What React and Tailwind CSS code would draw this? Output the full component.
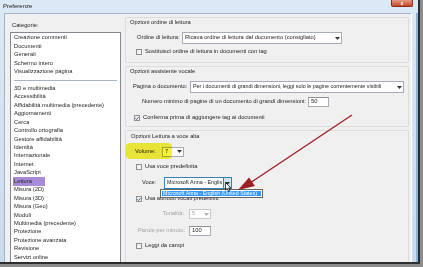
import React from "react";

const cats1 = ["Creazione commenti", "Documenti", "Generali", "Schermo intero", "Visualizzazione pagina"];
const cats2 = [
  "3D e multimedia",
  "Accessibilità",
  "Affidabilità multimedia (precedente)",
  "Aggiornamenti",
  "Cerca",
  "Controllo ortografia",
  "Gestore affidabilità",
  "Identità",
  "Internazionale",
  "Internet",
  "JavaScript",
  "Lettura",
  "Misura (2D)",
  "Misura (3D)",
  "Misura (Geo)",
  "Moduli",
  "Multimedia (precedente)",
  "Protezione",
  "Protezione avanzata",
  "Revisione",
  "Servizi online",
];

function Check({ checked }) {
  return (
    <div className="w-[6px] h-[6px] border border-[#8e8f8f] bg-gradient-to-br from-[#e6e6e6] to-white flex items-center justify-center shrink-0">
      {checked && (
        <svg width="5" height="5" viewBox="0 0 5 5">
          <path d="M0.6 2.4 L2 3.8 L4.4 0.8" stroke="#2a3d5c" strokeWidth="1" fill="none" />
        </svg>
      )}
    </div>
  );
}

function Arrow({ color = "#333" }) {
  return (
    <svg width="5" height="3" viewBox="0 0 5 3">
      <path d="M0 0 L5 0 L2.5 3 Z" fill={color} />
    </svg>
  );
}

function Select({ w, h = 12, text, disabled, focus, small }) {
  return (
    <div
      className={`flex items-stretch border ${focus ? "border-[#3c7fb1]" : disabled ? "border-[#c8c8c8]" : "border-[#a5acb5]"} bg-white shrink-0`}
      style={{ width: w, height: h }}
    >
      <div
        className={`flex-1 flex items-center pl-[2px] overflow-hidden whitespace-nowrap ${small ? "text-[5.4px]" : ""} ${disabled ? "text-[#a0a0a0]" : "text-[#1e1e1e]"}`}
      >
        {text}
      </div>
      <div
        className={`w-[8px] shrink-0 flex items-center justify-center ${focus ? "bg-[#cfe6f8] border-l border-[#3c7fb1]" : "bg-white"}`}
      >
        <Arrow color={disabled ? "#b0b0b0" : "#333"} />
      </div>
    </div>
  );
}

function Input({ w, h, text }) {
  return (
    <div
      className="border border-[#a5acb5] border-t-[#8a8f96] bg-white flex items-center pl-[2px] text-[#1e1e1e] shrink-0"
      style={{ width: w, height: h }}
    >
      {text}
    </div>
  );
}

export default function App() {
  return (
    <div className="relative w-[423px] h-[267px] bg-[#8c8c8c] overflow-hidden font-['Liberation_Sans',Arial,sans-serif] text-[5.75px] leading-none text-[#1e1e1e]">
      {/* window */}
      <div className="w-[420px] h-[264px] border-r-[2px] border-b-[2px] border-[#2e2e2e] bg-gradient-to-b from-[#dce9f6] to-[#c9dbee] flex flex-col">
        {/* title bar */}
        <div className="h-[13px] flex items-start shrink-0">
          <div className="pl-[3px] pt-[3px] text-[6px] text-[#1a1a1a]">Preferenze</div>
          <div className="flex-1" />
          <div className="w-[22px] h-[7px] mr-[5px] rounded-b-[2px] bg-gradient-to-b from-[#e49a82] to-[#c4452c] border border-[#8a2c1c] border-t-0 flex items-center justify-center text-white text-[5px] font-bold">
            x
          </div>
        </div>
        {/* body */}
        <div className="flex-1 flex min-h-0">
          <div className="w-[4px] shrink-0" />
          <div className="flex-1 bg-[#f0f0f0] border-l border-t border-[#9fb3c9] flex min-h-0">
            {/* left column */}
            <div className="w-[116px] shrink-0 pl-[5px] flex flex-col">
              <div className="h-[18px] flex items-end pb-[3px] pl-[2px]">Categorie:</div>
              <div className="flex-1 bg-white border border-[#828790] border-b-0 pt-[1px] flex flex-col overflow-hidden">
                {cats1.map((c) => (
                  <div key={c} className="h-[8.45px] flex items-center pl-[3px] shrink-0">
                    {c}
                  </div>
                ))}
                <div className="h-[8.45px] flex items-center px-[3px] shrink-0">
                  <div className="h-px w-full bg-[#a7b6c6]" />
                </div>
                {cats2.map((c) => (
                  <div key={c} className="h-[8.45px] flex items-center pl-[2px] shrink-0">
                    <span className={c === "Lettura" ? "bg-[#a78bd9] h-[8.45px] flex items-center px-[1px] w-[32px]" : "pl-[1px]"}>
                      {c}
                    </span>
                  </div>
                ))}
              </div>
            </div>
            {/* right column */}
            <div className="flex-1 pl-[4px] pr-[2px] pt-[3px] flex flex-col min-w-0">
              {/* group 1 */}
              <div className="h-[46px] border border-[#dcdcdc] rounded-[2px] flex flex-col shrink-0">
                <div className="h-[10px] flex items-center pl-[4px]">Opzioni ordine di lettura</div>
                <div className="mt-[4px] h-[12px] flex items-center pl-[11px]">
                  <div className="w-[45px]">Ordine di lettura:</div>
                  <Select w={160} text="Ricava ordine di lettura dal documento (consigliato)" />
                </div>
                <div className="mt-[4px] h-[8px] flex items-center pl-[10px] gap-[3px]">
                  <Check />
                  <span>Sostituisci ordine di lettura in documenti con tag</span>
                </div>
              </div>
              {/* group 2 */}
              <div className="mt-[3px] h-[61px] border border-[#dcdcdc] rounded-[2px] flex flex-col shrink-0">
                <div className="h-[10px] flex items-center pl-[4px]">Opzioni assistente vocale</div>
                <div className="mt-[4px] h-[12px] flex items-center pl-[7px]">
                  <div className="w-[57px]">Pagina o documento:</div>
                  <Select
                    w={214}
                    small
                    text="Per i documenti di grandi dimensioni, leggi solo le pagine correntemente visibili"
                  />
                </div>
                <div className="mt-[4px] h-[10px] flex items-center pl-[16px]">
                  <div className="w-[166px]">Numero minimo di pagine di un documento di grandi dimensioni:</div>
                  <Input w={21} h={10} text="50" />
                </div>
                <div className="mt-[7px] h-[8px] flex items-center pl-[8px] gap-[3px]">
                  <Check checked />
                  <span>Conferma prima di aggiungere tag ai documenti</span>
                </div>
              </div>
              {/* group 3 */}
              <div className="mt-[3px] flex-1 border border-[#dcdcdc] border-b-0 rounded-t-[2px] flex flex-col">
                <div className="mt-[1px] h-[10px] flex items-center pl-[5px]">Opzioni Lettura a voce alta</div>
                <div className="mt-[4px] h-[11px] flex items-center pl-[9px]">
                  <div className="w-[27px]">Volume:</div>
                  <Select w={22} h={10} text="7" />
                </div>
                <div className="mt-[6px] h-[8px] flex items-center pl-[10px] gap-[3px]">
                  <Check />
                  <span>Usa voce predefinita</span>
                </div>
                <div className="mt-[6px] h-[12px] flex items-center pl-[16px]">
                  <div className="w-[22px]">Voce:</div>
                  <Select w={68} small text="Microsoft Anna - Englis" focus />
                </div>
                <div className="mt-[6px] h-[8px] flex items-center pl-[10px] gap-[3px]">
                  <Check checked />
                  <span>Usa attributi vocali predefiniti</span>
                </div>
                <div className="mt-[6px] h-[10px] flex items-center">
                  <div className="w-[63px] text-right pr-[5px] text-[#a3a3a3]">Tonalità:</div>
                  <Select w={22} h={10} text="5" disabled />
                </div>
                <div className="mt-[7px] h-[10px] flex items-center">
                  <div className="w-[63px] text-right pr-[4px] text-[#a3a3a3]">Parole per minuto:</div>
                  <Input w={22} h={10} text="100" />
                </div>
                <div className="mt-[6px] h-[8px] flex items-center pl-[10px] gap-[3px]">
                  <Check />
                  <span>Leggi da campi</span>
                </div>
              </div>
            </div>
          </div>
          <div className="w-[7px] shrink-0 border-l border-white flex">
            <div className="flex-1" />
            <div className="w-[2px] bg-[#8fb0d6]" />
          </div>
        </div>
      </div>

      {/* yellow highlight */}
      <div className="absolute left-[126px] top-[143px] w-[46px] h-[16px] rounded-[4px] bg-[#f7f23a] mix-blend-multiply" />

      {/* dropdown list */}
      <div className="absolute left-[160px] top-[189px] w-[103px] h-[9px] bg-white border border-[#646464] p-[1px]">
        <div className="h-full bg-[#3399ff] text-white text-[5.3px] flex items-center pl-[1px] whitespace-nowrap overflow-hidden">
          Microsoft Anna - English (United States)
        </div>
      </div>

      {/* mouse cursor */}
      <svg className="absolute left-[225px] top-[182px]" width="7" height="10" viewBox="0 0 7 10">
        <path d="M0.5 0.5 L0.5 8 L2.3 6.4 L3.6 9.3 L4.8 8.8 L3.6 6 L6 6 Z" fill="white" stroke="#111" strokeWidth="0.8" />
      </svg>

      {/* red arrow */}
      <svg className="absolute left-0 top-0" width="423" height="267" viewBox="0 0 423 267">
        <line x1="352" y1="115" x2="250" y2="183" stroke="#9c1f24" strokeWidth="1.4" />
        <path d="M238 190 L255 186 L249 177.5 Z" fill="#9c1f24" />
      </svg>
    </div>
  );
}
